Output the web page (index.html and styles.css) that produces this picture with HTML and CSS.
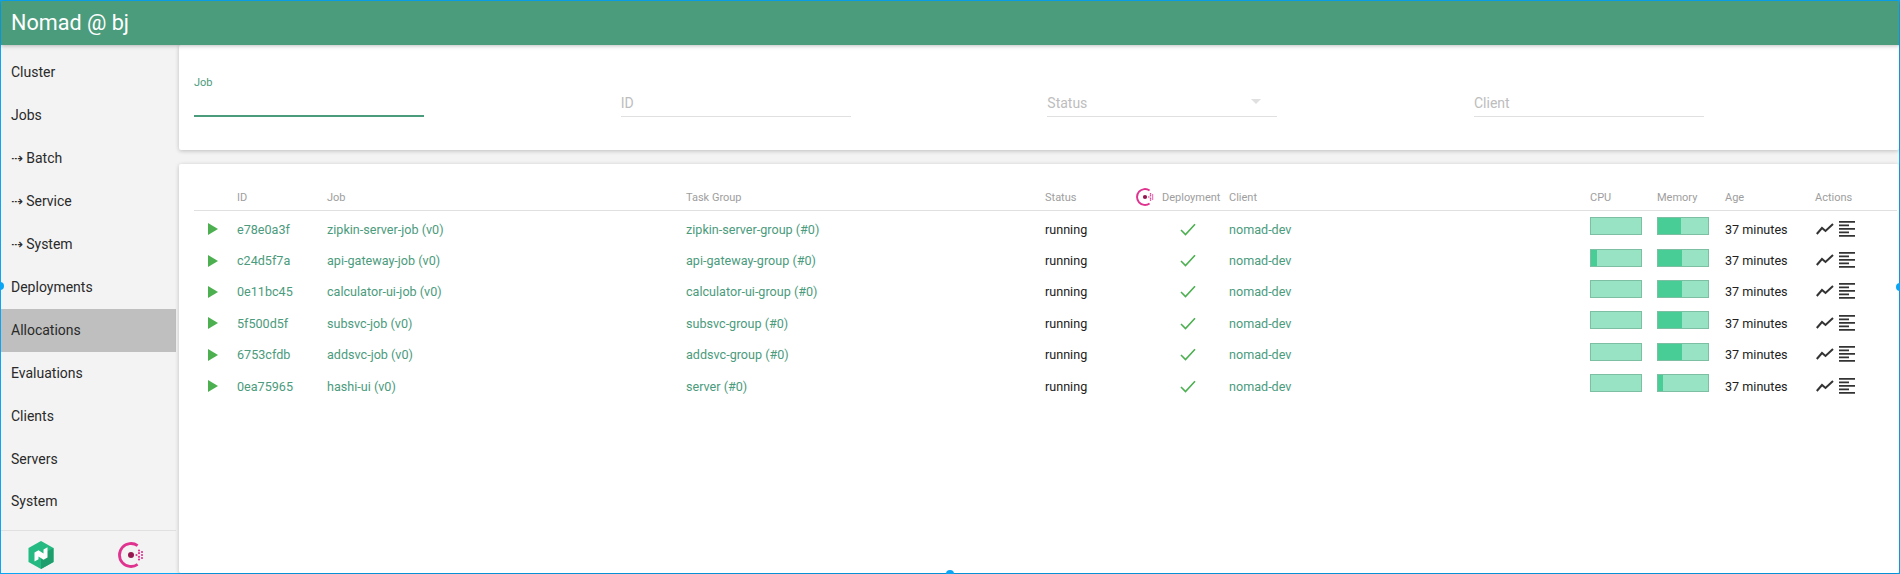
FILE: index.html
```html
<!DOCTYPE html>
<html lang="en">
<head>
<meta charset="utf-8">
<title>Nomad @ bj</title>
<link rel="stylesheet" href="styles.css">
</head>
<body>
<svg class="defs" width="0" height="0" aria-hidden="true">
  <defs>
    <symbol id="consul" viewBox="0 0 26 26">
      <path d="M19.6 3.6 A11.5 11.5 0 1 0 19.6 22.4" fill="none" stroke="#e0338f" stroke-width="2.8"/>
      <circle cx="13" cy="13" r="3" fill="#96164f"/>
      <g fill="#e0338f">
        <circle cx="18.5" cy="13" r="1.1"/>
        <circle cx="21" cy="8.5" r="1.1"/><circle cx="21" cy="11.2" r="1.1"/><circle cx="21" cy="14.8" r="1.1"/><circle cx="21" cy="17.5" r="1.1"/>
        <circle cx="24" cy="10" r="1.1"/><circle cx="24" cy="13" r="1.1"/><circle cx="24" cy="16" r="1.1"/>
      </g>
    </symbol>
    <symbol id="play" viewBox="0 0 10 12"><path d="M0 0 L10 6 L0 12 Z" fill="#4caf50"/></symbol>
    <symbol id="check" viewBox="0 0 16 13"><path d="M1 7 L5.5 11.5 L15 1.2" fill="none" stroke="#4caf50" stroke-width="1.6"/></symbol>
    <symbol id="chart" viewBox="0 0 18 12"><path d="M.8 11 L6 5 L9.5 8 L17 1" fill="none" stroke="#333" stroke-width="2"/></symbol>
    <symbol id="lines" viewBox="0 0 16 16"><path d="M0 0h16v1.8H0zM0 3.5h10v1.8H0zM0 7h16v1.8H0zM0 10.5h10v1.8H0zM0 14h16v1.8H0z" fill="#333"/></symbol>
  </defs>
</svg>
<div class="app">
  <header class="topbar">Nomad @ bj</header>
  <div class="main">
    <nav class="sidebar">
      <ul class="menu">
        <li class="menu-item">Cluster</li>
        <li class="menu-item">Jobs</li>
        <li class="menu-item"><span class="arrow">⇢</span> Batch</li>
        <li class="menu-item"><span class="arrow">⇢</span> Service</li>
        <li class="menu-item"><span class="arrow">⇢</span> System</li>
        <li class="menu-item">Deployments</li>
        <li class="menu-item active">Allocations</li>
        <li class="menu-item">Evaluations</li>
        <li class="menu-item">Clients</li>
        <li class="menu-item">Servers</li>
        <li class="menu-item">System</li>
      </ul>
      <div class="sidebar-foot">
        <svg class="nomad-logo" viewBox="0 0 26 28" aria-hidden="true">
          <path d="M13 0 L25.5 7 V21 L13 28 L.5 21 V7 Z" fill="#25ba81"/>
          <path d="M13 14 L25.5 7 V21 L13 28 Z" fill="#1f9d6c"/>
          <path d="M6.5 20.5 V11.5 L10.5 9.2 L15.5 12.6 V8.4 L19.5 6.2 V16.6 L15.5 18.8 L10.5 15.4 V18.2 Z" fill="#fff"/>
        </svg>
        <svg class="consul-logo"><use href="#consul"/></svg>
      </div>
    </nav>
    <main class="content">
      <section class="card filters">
        <div class="field focused"><label class="float-label">Job</label></div>
        <div class="field"><span class="hint">ID</span></div>
        <div class="field"><span class="hint">Status</span><span class="caret"></span></div>
        <div class="field"><span class="hint">Client</span></div>
      </section>
      <section class="card results">
        <table class="grid">
          <thead>
            <tr>
              <th class="c-state"></th><th class="c-id">ID</th><th class="c-job">Job</th><th class="c-group">Task Group</th>
              <th class="c-status">Status</th>
              <th class="c-consul"><svg class="consul-head"><use href="#consul"/></svg></th>
              <th class="c-deploy">Deployment</th><th class="c-client">Client</th><th class="c-cpu">CPU</th><th class="c-mem">Memory</th><th class="c-age">Age</th><th class="c-act">Actions</th>
            </tr>
          </thead>
          <tbody>
            <tr>
              <td><svg class="play"><use href="#play"/></svg></td><td class="link">e78e0a3f</td><td class="link">zipkin-server-job (v0)</td><td class="link">zipkin-server-group (#0)</td><td>running</td><td></td>
              <td><svg class="check"><use href="#check"/></svg></td><td class="link">nomad-dev</td>
              <td class="bar"><div class="meter"><div class="fill" style="width:0%"></div></div></td><td class="bar"><div class="meter"><div class="fill" style="width:46%"></div></div></td><td>37 minutes</td>
              <td class="act"><div class="actions"><svg class="chart"><use href="#chart"/></svg><svg class="lines"><use href="#lines"/></svg></div></td>
            </tr>
            <tr>
              <td><svg class="play"><use href="#play"/></svg></td><td class="link">c24d5f7a</td><td class="link">api-gateway-job (v0)</td><td class="link">api-gateway-group (#0)</td><td>running</td><td></td>
              <td><svg class="check"><use href="#check"/></svg></td><td class="link">nomad-dev</td>
              <td class="bar"><div class="meter"><div class="fill" style="width:11%"></div></div></td><td class="bar"><div class="meter"><div class="fill" style="width:47%"></div></div></td><td>37 minutes</td>
              <td class="act"><div class="actions"><svg class="chart"><use href="#chart"/></svg><svg class="lines"><use href="#lines"/></svg></div></td>
            </tr>
            <tr>
              <td><svg class="play"><use href="#play"/></svg></td><td class="link">0e11bc45</td><td class="link">calculator-ui-job (v0)</td><td class="link">calculator-ui-group (#0)</td><td>running</td><td></td>
              <td><svg class="check"><use href="#check"/></svg></td><td class="link">nomad-dev</td>
              <td class="bar"><div class="meter"><div class="fill" style="width:0%"></div></div></td><td class="bar"><div class="meter"><div class="fill" style="width:47%"></div></div></td><td>37 minutes</td>
              <td class="act"><div class="actions"><svg class="chart"><use href="#chart"/></svg><svg class="lines"><use href="#lines"/></svg></div></td>
            </tr>
            <tr>
              <td><svg class="play"><use href="#play"/></svg></td><td class="link">5f500d5f</td><td class="link">subsvc-job (v0)</td><td class="link">subsvc-group (#0)</td><td>running</td><td></td>
              <td><svg class="check"><use href="#check"/></svg></td><td class="link">nomad-dev</td>
              <td class="bar"><div class="meter"><div class="fill" style="width:0%"></div></div></td><td class="bar"><div class="meter"><div class="fill" style="width:47%"></div></div></td><td>37 minutes</td>
              <td class="act"><div class="actions"><svg class="chart"><use href="#chart"/></svg><svg class="lines"><use href="#lines"/></svg></div></td>
            </tr>
            <tr>
              <td><svg class="play"><use href="#play"/></svg></td><td class="link">6753cfdb</td><td class="link">addsvc-job (v0)</td><td class="link">addsvc-group (#0)</td><td>running</td><td></td>
              <td><svg class="check"><use href="#check"/></svg></td><td class="link">nomad-dev</td>
              <td class="bar"><div class="meter"><div class="fill" style="width:0%"></div></div></td><td class="bar"><div class="meter"><div class="fill" style="width:47%"></div></div></td><td>37 minutes</td>
              <td class="act"><div class="actions"><svg class="chart"><use href="#chart"/></svg><svg class="lines"><use href="#lines"/></svg></div></td>
            </tr>
            <tr>
              <td><svg class="play"><use href="#play"/></svg></td><td class="link">0ea75965</td><td class="link">hashi-ui (v0)</td><td class="link">server (#0)</td><td>running</td><td></td>
              <td><svg class="check"><use href="#check"/></svg></td><td class="link">nomad-dev</td>
              <td class="bar"><div class="meter"><div class="fill" style="width:0%"></div></div></td><td class="bar"><div class="meter"><div class="fill" style="width:10%"></div></div></td><td>37 minutes</td>
              <td class="act"><div class="actions"><svg class="chart"><use href="#chart"/></svg><svg class="lines"><use href="#lines"/></svg></div></td>
            </tr>
          </tbody>
        </table>
      </section>
    </main>
  </div>
</div>
<span class="handle h-top"></span><span class="handle h-left"></span><span class="handle h-right"></span><span class="handle h-bottom"></span>
</body>
</html>
```
FILE: styles.css
```css
* { box-sizing: border-box; }
html, body { height: 100%; }
body {
  margin: 0;
  overflow: hidden;
  position: relative;
  font-family: Roboto, "Liberation Sans", sans-serif;
  background: #f3f3f3;
  color: #212121;
}
.defs { position: absolute; }
.app {
  height: 574px;
  display: flex;
  flex-direction: column;
  border: 1px solid #0aa6f5;
  background: #f3f3f3;
}
.topbar {
  height: 44px;
  flex: none;
  padding-left: 10px;
  background: #4b9b7d;
  color: #fff;
  font-size: 21.6px;
  line-height: 43px;
  position: relative;
  z-index: 2;
  box-shadow: 0 1px 4px rgba(0,0,0,.25);
}
.main { flex: 1; display: flex; min-height: 0; }
.sidebar {
  width: 178px;
  flex: none;
  display: flex;
  flex-direction: column;
  padding-right: 3px;
}
.menu { list-style: none; margin: 0; padding: 6px 0 0; flex: 1; }
.menu-item {
  height: 43px;
  line-height: 43px;
  padding-left: 10px;
  font-size: 14px;
  color: #2a2a2a;
}
.menu-item:last-child { line-height: 41px; }
.menu-item.active { background: #bfbfbf; }
.arrow { font-family: "DejaVu Sans", sans-serif; font-size: 14px; }
.sidebar-foot {
  height: 43px;
  flex: none;
  border-top: 1px solid #e0e0e0;
  display: flex;
  align-items: center;
  padding-top: 6px;
}
.nomad-logo { width: 26px; height: 28px; margin-left: 27px; }
.consul-logo { width: 26px; height: 26px; margin-left: 64px; }
.content { flex: 1; min-width: 0; display: flex; flex-direction: column; gap: 14px; }
.card { background: #fff; box-shadow: 0 1px 4px rgba(0,0,0,.22); border-radius: 2px; }
.filters {
  height: 105px;
  flex: none;
  display: grid;
  grid-template-columns: repeat(4, 230px);
  column-gap: 196.67px;
  padding: 0 15px;
}
.field {
  height: 72px;
  position: relative;
  border-bottom: 1px solid #e0e0e0;
}
.field.focused { border-bottom: 2px solid #4b9b7d; }
.float-label { position: absolute; left: 0; top: 31px; font-size: 11px; color: #4b9b7d; }
.hint { position: absolute; left: 0; top: 49px; font-size: 14px; color: #bdbdbd; line-height: 19px; }
.caret {
  position: absolute;
  right: 16px;
  top: 54px;
  border: 5px solid transparent;
  border-top: 5px solid #e0e0e0;
  border-bottom: 0;
}
.results { flex: 1; padding: 21px 2px 0 15px; }
.grid { width: 1703px; border-collapse: collapse; table-layout: fixed; font-size: 12.6px; }
.grid th {
  height: 25px;
  padding: 3px 0 4px;
  text-align: left;
  font-weight: 400;
  font-size: 11px;
  color: #9e9e9e;
  border-bottom: 1px solid #e0e0e0;
  white-space: nowrap;
}
.grid td { height: 31.4px; padding: 6px 0 0; white-space: nowrap; color: #212121; }
.grid td.link { color: #4b9b7d; }
.grid td.bar { padding-top: 0; }
.grid td.act { padding-top: 5px; }
.c-state { width: 43px; }
.c-id { width: 90px; }
.c-job { width: 359px; }
.c-group { width: 359px; }
.c-status { width: 90px; }
.c-consul { width: 27px; }
.c-deploy { width: 67px; }
.c-client { width: 361px; }
.c-cpu { width: 67px; }
.c-mem { width: 68px; }
.c-age { width: 90px; }
.c-act { width: 82px; }
.consul-head { width: 18px; height: 18px; display: block; margin-left: 1px; }
.play { width: 10px; height: 12px; display: block; margin-left: 14px; }
.check { width: 16px; height: 13px; display: block; margin-left: 18px; }
.meter {
  width: 52px;
  height: 18px;
  background: #98e3c4;
  border: 1px solid #7dbfa3;
}
.fill { height: 100%; background: #47cd95; }
.actions { display: flex; align-items: center; gap: 5px; padding-left: 1px; }
.chart { width: 18px; height: 12px; }
.lines { width: 16px; height: 16px; }
.handle { position: absolute; width: 8px; height: 8px; border-radius: 50%; background: #0aa6f5; }
.h-top { left: 947px; top: -5px; }
.h-left { left: -4px; top: 282px; }
.h-right { left: 1896px; top: 283px; }
.h-bottom { left: 946px; top: 570px; }
```
